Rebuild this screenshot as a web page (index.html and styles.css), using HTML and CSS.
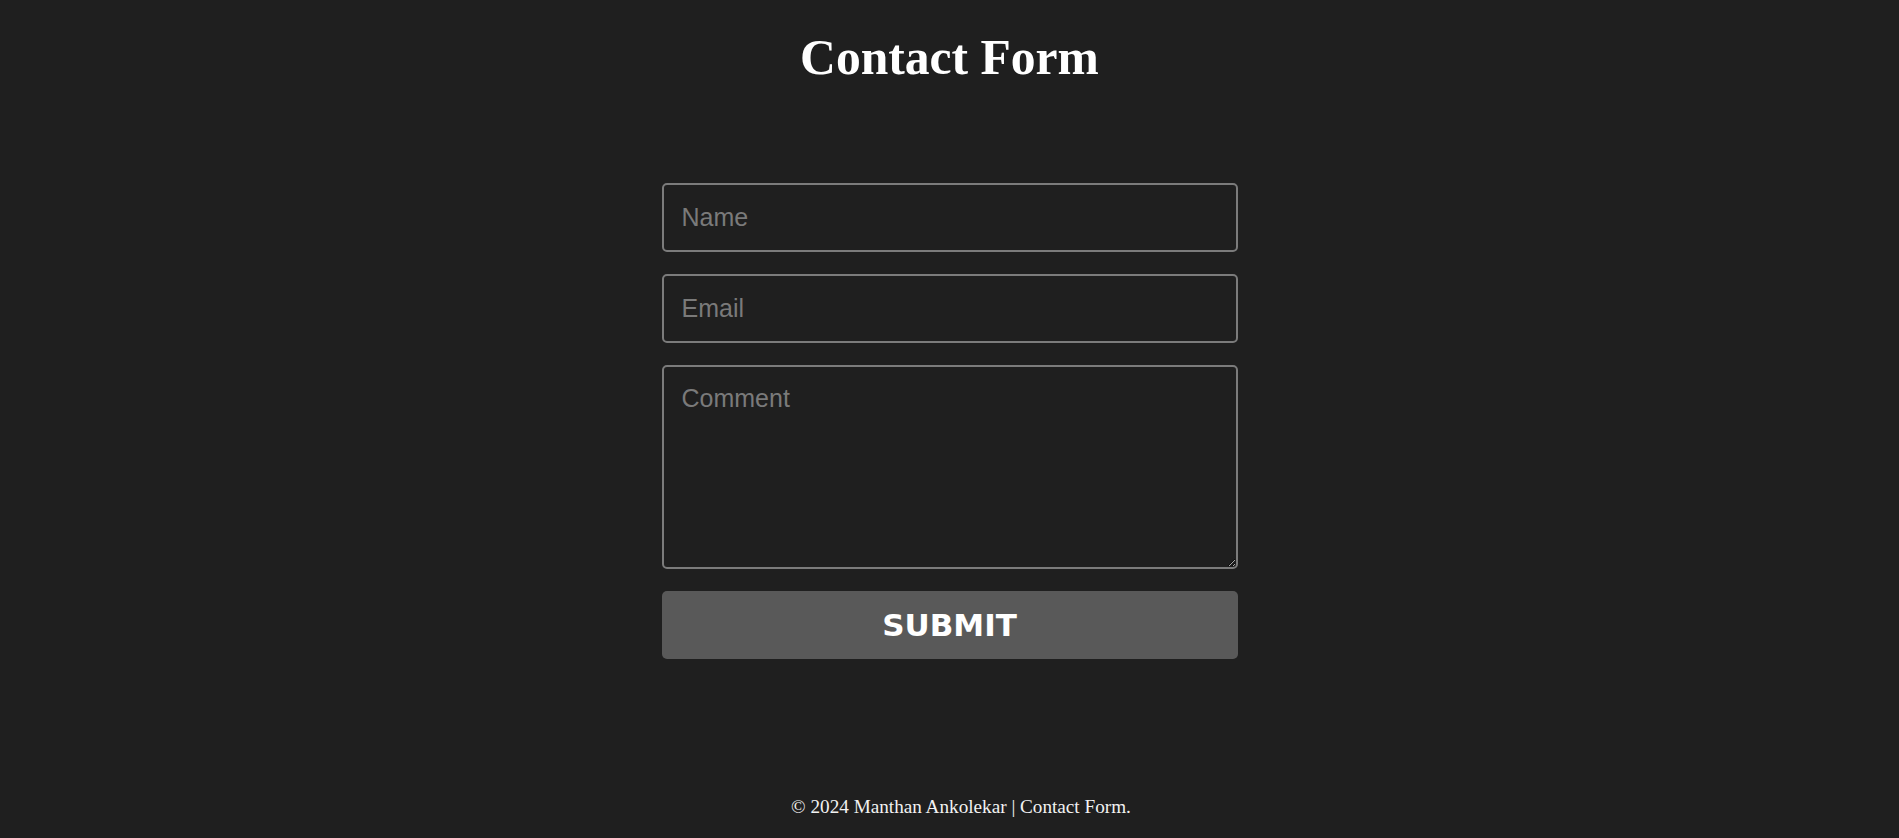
FILE: index.html
```html
<!DOCTYPE html>
<html lang="en">
<head>
<meta charset="utf-8">
<title>Contact Form</title>
<link rel="stylesheet" href="styles.css">
</head>
<body>
  <h1 class="title">Contact Form</h1>
  <form class="contact-form">
    <input class="field" type="text" placeholder="Name">
    <input class="field" type="email" placeholder="Email">
    <textarea class="field comment" placeholder="Comment"></textarea>
    <button class="submit" type="button">SUBMIT</button>
  </form>
  <footer class="footer">© 2024 Manthan Ankolekar | Contact Form.</footer>
</body>
</html>
```
FILE: styles.css
```css
html, body {
  margin: 0;
  padding: 0;
}
body {
  background: #1f1f1f;
  color: #fff;
  font-family: "Liberation Serif", "Times New Roman", serif;
  min-height: 100vh;
  display: flex;
  flex-direction: column;
  align-items: center;
  box-sizing: border-box;
  padding-bottom: 20px;
}
.title {
  margin: 30px 0 0;
  font-size: 49.6px;
  line-height: 56px;
  font-weight: 700;
  text-align: center;
}
.contact-form {
  margin-top: 97px;
  width: 576px;
  display: flex;
  flex-direction: column;
  gap: 22px;
}
.field {
  box-sizing: border-box;
  width: 100%;
  height: 69px;
  margin: 0;
  padding: 0 18px;
  background: #1f1f1f;
  border: 2px solid #7b7b7b;
  border-radius: 5px;
  color: #ddd;
  font-family: "Liberation Sans", Arial, sans-serif;
  font-size: 25px;
  outline: none;
}
.field::placeholder {
  color: #7a7a7a;
}
.comment {
  height: 204px;
  padding: 17px 18px;
  resize: vertical;
  display: block;
}
.submit {
  height: 68px;
  margin: 0;
  border: none;
  border-radius: 5px;
  background: #595959;
  color: #fff;
  font-family: "DejaVu Sans", sans-serif;
  font-weight: 700;
  font-size: 31px;
  cursor: pointer;
}
.footer {
  margin-top: auto;
  padding-left: 23px;
  font-size: 19.2px;
  line-height: 22px;
  text-align: center;
  color: #f2f2f2;
}
```
